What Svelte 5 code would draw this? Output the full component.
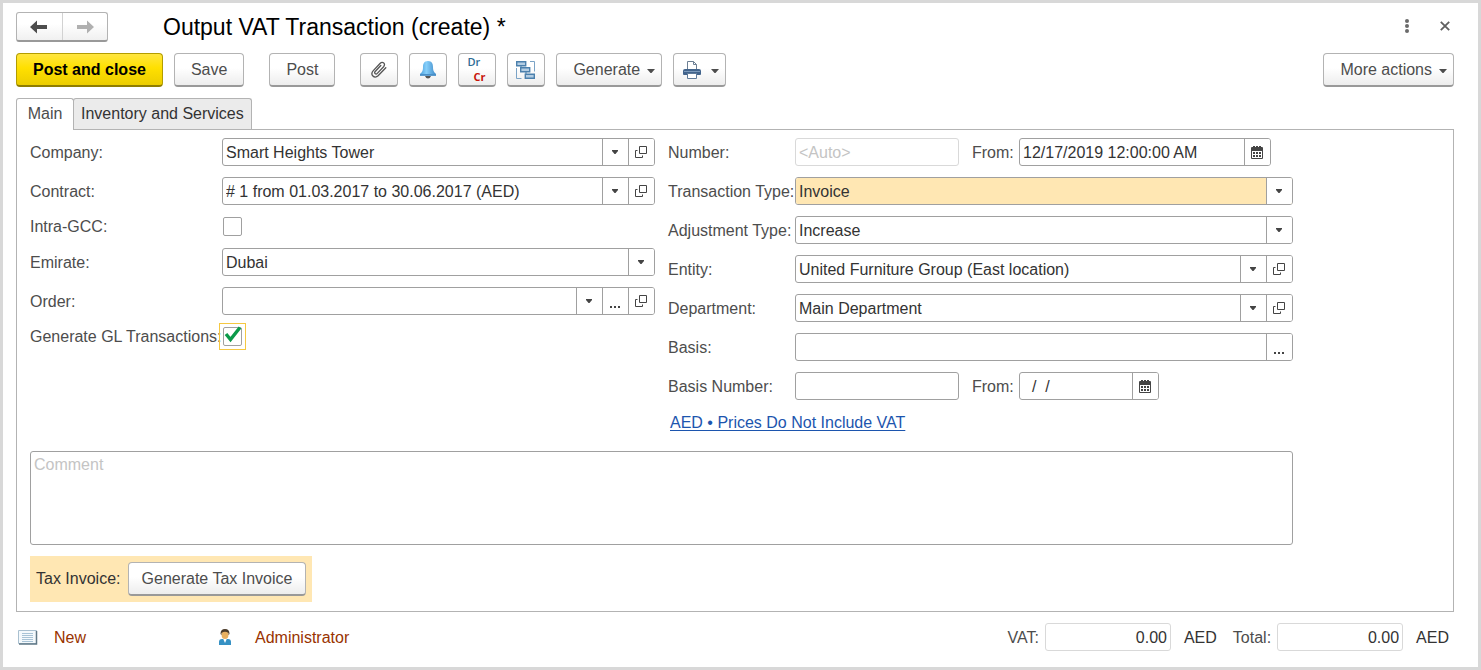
<script>
  let tab = $state('main');
  let intraGcc = $state(false);
  let generateGl = $state(true);
</script>

{#snippet caret()}
  <svg class="caret" width="8" height="4" viewBox="0 0 8 4" aria-hidden="true"><path d="M0 0h8L4.5 4h-1z" fill="currentColor" /></svg>
{/snippet}

{#snippet smallCaret()}
  <svg width="6" height="4" viewBox="0 0 6 4" aria-hidden="true"><path d="M0 0h6v1L3.5 4h-1L0 1z" fill="currentColor" /></svg>
{/snippet}

{#snippet openButton(name)}
  <button class="cell" type="button" aria-label={name}>
    <svg width="12" height="12" viewBox="0 0 12 12" fill="none" stroke="currentColor" aria-hidden="true">
      <path d="M4.5 .5h7v7h-7zM2.5 4.5h-2v7h7v-2" />
    </svg>
  </button>
{/snippet}

{#snippet dots(name)}
  <button class="cell low" type="button" aria-label={name}>
    <svg width="12" height="2" viewBox="0 0 12 2" aria-hidden="true"><path d="M1 0h2v2H1zM5 0h2v2H5zM9 0h2v2H9z" fill="currentColor" /></svg>
  </button>
{/snippet}

{#snippet calendar(name)}
  <button class="cell" type="button" aria-label={name}>
    <svg width="12" height="13" viewBox="0 0 12 13" aria-hidden="true">
      <path fill="currentColor" fill-rule="evenodd" d="M0 2q0-1 1-1h1V0h2v1h1V0h2v1h1V0h2v1h1q1 0 1 1v10q0 1-1 1H1q-1 0-1-1zM1 5v7h10V5z" />
      <path fill="currentColor" d="M2 6h2v2H2zM5 6h2v2H5zM8 6h2v2H8zM2 9h2v2H2zM5 9h2v2H5zM8 9h2v2H8z" />
    </svg>
  </button>
{/snippet}

{#snippet picker(id, value, marked = false)}
  <div class="picker" class:marked>
    <select {id}><option>{value}</option></select>
    <span class="arrow">{@render smallCaret()}</span>
  </div>
{/snippet}

<main class="window">
  <header class="titlebar">
    <div class="history">
      <button type="button" aria-label="Back">
        <svg width="18" height="14" viewBox="0 0 18 14" aria-hidden="true"><path d="M0 7l7-6.500v4.500h10v4H7v4.500z" fill="#4d4d4d" /></svg>
      </button>
      <button type="button" aria-label="Forward">
        <svg width="18" height="14" viewBox="0 0 18 14" aria-hidden="true"><path d="M18 7l-7-6.500v4.500H1v4h10v4.500z" fill="#b0b0b0" /></svg>
      </button>
    </div>
    <h1>Output VAT Transaction (create) *</h1>
    <div class="window-tools">
      <button type="button" aria-label="Menu">
        <svg width="6" height="16" viewBox="0 0 6 16" fill="#6b6b6b" aria-hidden="true"><circle cx="3" cy="3" r="2" /><circle cx="3" cy="8" r="2" /><circle cx="3" cy="13" r="2" /></svg>
      </button>
      <button type="button" aria-label="Close">
        <svg width="10" height="10" viewBox="0 0 10 10" stroke="#606060" stroke-width="1.800" aria-hidden="true"><path d="M.8.8l8.400 8.400M9.200.8L.8 9.200" /></svg>
      </button>
    </div>
  </header>

  <div class="toolbar">
    <button class="btn primary" type="button">Post and close</button>
    <button class="btn" type="button">Save</button>
    <button class="btn apart" type="button">Post</button>
    <button class="btn icon apart" type="button" aria-label="Attachments">
      <svg width="18" height="18" viewBox="0 0 18 18" fill="none" stroke="#555" stroke-width="1.300" stroke-linecap="round" aria-hidden="true">
        <path d="M10.800 4.500L5.200 10.500c-1.400 1.600.6 3.400 2.100 1.900l6.300-6.700c2.600-3-1-5.800-3.600-3.200L3.300 9.600c-3.600 4 1 8.800 4.800 5.200l7.700-8.100" />
      </svg>
    </button>
    <button class="btn icon" type="button" aria-label="Reminders">
      <svg width="18" height="19" viewBox="0 0 18 19" aria-hidden="true">
        <defs>
          <linearGradient id="bell" x1="0" x2="1"><stop offset="0" stop-color="#4a9fdc" /><stop offset=".4" stop-color="#86cffa" /><stop offset="1" stop-color="#3f8bc9" /></linearGradient>
        </defs>
        <path d="M6 16h6q-1 2.500-3 2.500T6 16" fill="#555" />
        <path d="M9 1c4 0 5 3 5 6 0 4 1 5 3 7v1.500H1V14c2-2 3-3 3-7 0-3 1-6 5-6" fill="url(#bell)" />
        <path d="M1 14h16v1.800H1z" fill="#4a90c8" />
      </svg>
    </button>
    <button class="btn icon drcr" type="button" aria-label="Debit and credit entries"><span class="dr">Dr</span><span class="cr">Cr</span></button>
    <button class="btn icon" type="button" aria-label="Related documents">
      <svg width="20" height="18" viewBox="0 0 20 18" fill="#b3cde3" stroke="#4b80ad" aria-hidden="true">
        <path d="M14 .5h4.500v10M.5 7v10.500H5.500" fill="none" stroke="#7ba3c6" />
        <path d="M5 4.500v4M10 11v4" fill="none" />
        <g stroke-width="1.400">
          <path d="M.7.7h9v4h-9zM4.700 6.700h9v4h-9zM9.300 13.300h9v4h-9z" />
        </g>
      </svg>
    </button>
    <button class="btn menu" type="button">Generate {@render caret()}</button>
    <button class="btn print" type="button" aria-label="Print">
      <svg width="18" height="18" viewBox="0 0 18 18" aria-hidden="true">
        <path d="M4.500 9V.5h6l3 3V9" fill="#fff" stroke="#6c7f93" />
        <path d="M10.500.5v3h3" fill="none" stroke="#6c7f93" />
        <path d="M2 8h14q2 0 2 2v3q0 1-1 1H1q-1 0-1-1v-3q0-2 2-2" fill="#42648c" />
        <path d="M1 10h16v1H1z" fill="#7c9abb" />
        <path d="M4.500 12.500h9v5h-9z" fill="#fff" stroke="#5f7a99" />
      </svg>
      {@render caret()}
    </button>
    <button class="btn menu end" type="button">More actions {@render caret()}</button>
  </div>

  <div class="tabs" role="tablist">
    <button type="button" role="tab" aria-selected={tab === 'main'} onclick={() => (tab = 'main')}>Main</button>
    <button type="button" role="tab" aria-selected={tab === 'items'} onclick={() => (tab = 'items')}>Inventory and Services</button>
  </div>

  <section class="panel">
    <div class="columns">
      <div class="fields left">
        <label for="company">Company:</label>
        <div class="field">{@render picker('company', 'Smart Heights Tower')}{@render openButton('Open company')}</div>
        <label for="contract">Contract:</label>
        <div class="field">{@render picker('contract', '# 1 from 01.03.2017 to 30.06.2017 (AED)')}{@render openButton('Open contract')}</div>
        <label for="intra">Intra-GCC:</label>
        <div class="check"><input id="intra" type="checkbox" bind:checked={intraGcc} /></div>
        <label for="emirate">Emirate:</label>
        <div class="field">{@render picker('emirate', 'Dubai')}</div>
        <label for="order">Order:</label>
        <div class="field">{@render picker('order', '')}{@render dots('Choose order')}{@render openButton('Open order')}</div>
        <label for="gl">Generate GL Transactions:</label>
        <div class="check focused">
          <input id="gl" type="checkbox" bind:checked={generateGl} />
          {#if generateGl}
            <svg class="tick" width="18" height="17" viewBox="0 0 18 17" aria-hidden="true"><path d="M2 8l4.500 5.500L16 1.500" fill="none" stroke="#0b9a4a" stroke-width="3.400" /></svg>
          {/if}
        </div>
      </div>

      <div class="fields right">
        <label for="number">Number:</label>
        <div class="pair">
          <div class="field short pale"><input id="number" type="text" placeholder="<Auto>" /></div>
          <label for="from">From:</label>
          <div class="field datetime"><input id="from" type="text" value="12/17/2019 12:00:00 AM" />{@render calendar('Choose date')}</div>
        </div>
        <label for="type">Transaction Type:</label>
        <div class="field">{@render picker('type', 'Invoice', true)}</div>
        <label for="adjustment">Adjustment Type:</label>
        <div class="field">{@render picker('adjustment', 'Increase')}</div>
        <label for="entity">Entity:</label>
        <div class="field">{@render picker('entity', 'United Furniture Group (East location)')}{@render openButton('Open entity')}</div>
        <label for="department">Department:</label>
        <div class="field">{@render picker('department', 'Main Department')}{@render openButton('Open department')}</div>
        <label for="basis">Basis:</label>
        <div class="field"><input id="basis" type="text" />{@render dots('Choose basis')}</div>
        <label for="basis-number">Basis Number:</label>
        <div class="pair">
          <div class="field short"><input id="basis-number" type="text" /></div>
          <label for="basis-from">From:</label>
          <div class="field date"><input id="basis-from" type="text" value="  /  /" />{@render calendar('Choose basis date')}</div>
        </div>
        <a class="prices" href="#prices">AED • Prices Do Not Include VAT</a>
      </div>
    </div>

    <textarea aria-label="Comment" placeholder="Comment"></textarea>

    <div class="tax">
      <span>Tax Invoice:</span>
      <button class="btn" type="button">Generate Tax Invoice</button>
    </div>
  </section>

  <footer>
    <svg width="20" height="15" viewBox="0 0 20 15" aria-hidden="true">
      <path d="M.5.500h18v13H.5z" fill="#f4f9fc" stroke="#a9c0d0" />
      <path d="M18.500 1v13H1" fill="none" stroke="#607886" stroke-width="1.500" />
      <path d="M4 3.500h11M4 5.500h11M4 7.500h11M4 9.500h11M4 11.500h11" stroke="#a8c3d6" />
    </svg>
    <a class="status" href="#status">New</a>
    <svg width="12" height="16" viewBox="0 0 12 16" aria-hidden="true">
      <path d="M0 16v-3q0-3 3-3h6q3 0 3 3v3z" fill="#3691c4" />
      <path d="M4 9.500h4L6 14z" fill="#fff" />
      <ellipse cx="6" cy="5.500" rx="3.500" ry="4.500" fill="#e8b060" />
      <path d="M1.500 5Q1.500 0 6 0t4.500 5L9.500 6V4Q6 1.500 2.500 4v2z" fill="#4a3a28" />
    </svg>
    <a href="#user">Administrator</a>
    <div class="totals">
      <label for="vat">VAT:</label>
      <div class="field sum pale"><input id="vat" type="text" value="0.00" readonly /></div>
      <span>AED</span>
      <label for="total">Total:</label>
      <div class="field sum pale"><input id="total" type="text" value="0.00" readonly /></div>
      <span>AED</span>
    </div>
  </footer>
</main>

<style>
  .window, .window * { box-sizing: border-box; }
  .window {
    min-height: 100vh;
    padding: 9px 24px 12px 13px;
    border: 3px solid #d8d8d8;
    background: #fff;
    color: #4d4d4d;
    font: 16px/20px "Liberation Sans", Arial, sans-serif;
  }
  button, input, select, textarea { margin: 0; font: inherit; color: inherit; }
  button { padding: 0; border: 0; background: none; }
  svg { display: block; flex: none; }

  .titlebar { display: flex; align-items: center; height: 30px; }
  .history {
    display: flex;
    width: 92px;
    height: 30px;
    margin-right: 55px;
    border: 1px solid #b3b3b3;
    border-bottom: 2px solid #999;
    border-radius: 3px;
    background: linear-gradient(#fff 40%, #f0f0f0);
  }
  .history button { display: grid; flex: 1; place-items: center; }
  .history button + button { border-left: 1px solid #d2d2d2; }
  h1 { margin: 0; color: #000; font-size: 23px; font-weight: 400; line-height: 28px; }
  .window-tools { display: flex; gap: 30px; margin-left: auto; padding: 0 4px 2px 0; }
  .window-tools button { display: grid; place-items: center; }

  .toolbar { display: flex; gap: 11px; margin-top: 11px; }
  .btn {
    display: flex;
    align-items: center;
    justify-content: center;
    height: 34px;
    padding: 0 16px;
    border: 1px solid #b3b3b3;
    border-bottom: 2px solid #999;
    border-radius: 4px;
    background: linear-gradient(#fff 45%, #ededed);
    white-space: nowrap;
  }
  .primary {
    border-color: #b39d00 #b39d00 #8f7d00;
    background: linear-gradient(#ffe640, #ffe000 45%, #eccd00);
    color: #000;
    font-weight: 700;
  }
  .apart { margin-left: 14px; }
  .icon { width: 38px; padding: 0; }
  .menu { gap: 7px; padding-right: 6px; }
  .menu .caret, .print .caret { margin-top: 3px; }
  .print { gap: 10px; padding: 0 6px 0 9px; }
  .end { margin-left: auto; }
  .drcr { display: grid; justify-content: stretch; padding: 0 10px 0 8px; font: 700 11px/12px "Open Sans", sans-serif; }
  .dr { justify-self: start; color: #2d6a94; font-weight: 600; }
  .cr { justify-self: end; color: #c8140a; }

  .tabs { display: flex; margin-top: 11px; }
  .tabs button {
    min-width: 58px;
    height: 31px;
    padding: 0 7px;
    border: 1px solid #b3b3b3;
    border-bottom: 0;
    border-radius: 3px 3px 0 0;
    background: #ebebeb;
    color: #333;
  }
  .tabs button + button { margin-left: -1px; }
  .tabs [aria-selected='true'] { z-index: 1; height: 32px; margin-bottom: -1px; padding-bottom: 1px; background: #fff; color: #4d4d4d; }

  .panel { padding: 8px 160px 9px 13px; border: 1px solid #b3b3b3; }
  .columns { display: grid; grid-template-columns: 1fr 1fr; gap: 13px; }
  .fields { display: grid; gap: 11px 0; align-content: start; align-items: center; }
  .left { grid-template-columns: 192px 1fr; }
  .right { grid-template-columns: 127px 1fr; }
  label { padding-top: 1px; white-space: nowrap; }

  .field {
    display: flex;
    height: 28px;
    border: 1px solid #a0a0a0;
    border-radius: 3px;
    background: #fff;
    color: #333;
    overflow: hidden;
  }
  .field input {
    flex: 1;
    min-width: 0;
    padding: 2px 3px 0;
    border: 0;
    outline: 0;
    background: none;
  }
  .field.pale { border-color: #d9d9d9; }
  ::placeholder { color: #c4c4c4; opacity: 1; }
  .picker { display: grid; flex: 1; grid-template-columns: 1fr 26px; min-width: 0; }
  .picker select {
    grid-area: 1 / 1 / 2 / 3;
    min-width: 0;
    padding: 2px 29px 0 3px;
    border: 0;
    border-radius: 0;
    outline: 0;
    appearance: none;
    background: none;
  }
  .marked select { background: #ffe7b3; }
  .arrow, .cell {
    display: grid;
    flex: none;
    place-items: center;
    width: 26px;
    padding-right: 1px;
    border-left: 1px solid #a0a0a0;
    background: #fff;
    color: #444;
  }
  .arrow { grid-area: 1 / 2; pointer-events: none; }
  .low { align-items: end; padding-bottom: 6px; }

  .check { display: grid; place-items: center; width: 21px; height: 21px; }
  .check > * { grid-area: 1 / 1; }
  .check input { appearance: none; width: 19px; height: 19px; border: 1px solid #a0a0a0; border-radius: 2px; background: #fff; }
  .focused { outline: 1px solid #f5c842; outline-offset: 2px; }
  .tick { pointer-events: none; margin-bottom: 4px; }

  .pair { display: flex; align-items: center; }
  .pair label { width: 60px; padding-left: 13px; }
  .short { width: 164px; }
  .datetime { width: 252px; }
  .date { width: 140px; }
  .date input { white-space: pre; }
  a { color: #993300; text-decoration: none; }
  .prices {
    grid-column: 1 / -1;
    justify-self: start;
    margin: 2px 2px 0;
    color: #1c55ae;
    text-decoration: underline 1px;
    text-decoration-skip-ink: none;
    text-underline-offset: 2px;
  }

  textarea {
    display: block;
    width: 100%;
    height: 94px;
    margin-top: 18px;
    padding: 3px;
    border: 1px solid #a0a0a0;
    border-radius: 3px;
    outline: 0;
    resize: none;
    background: #fff;
  }
  .tax { display: flex; align-items: center; width: fit-content; margin-top: 11px; padding: 6px; background: #ffe7b3; color: #333; }
  .tax span { min-width: 92px; }
  .tax .btn { padding: 0 12px; min-width: 178px; color: #4d4d4d; }

  footer { display: flex; align-items: center; margin-top: 11px; padding: 0 5px 0 2px; }
  footer > a { margin-left: 16px; padding-top: 1px; }
  footer > .status { width: 165px; }
  footer > .status ~ a { margin-left: 24px; }
  .totals { display: flex; align-items: center; margin-left: auto; color: #333; }
  .totals label { padding-right: 6px; color: #4d4d4d; }
  .totals span { padding: 1px 0 0 13px; }
  .totals span + label { padding-left: 16px; }
  .sum { width: 126px; }
  .sum input { text-align: right; }
</style>
